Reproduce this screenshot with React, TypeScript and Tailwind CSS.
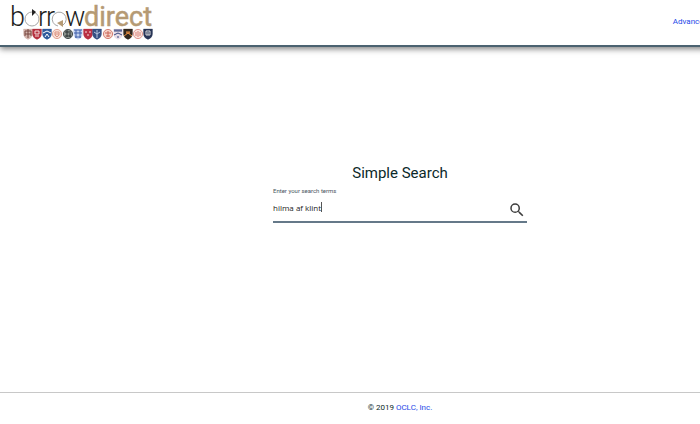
import { useState } from "react";

type Crest = {
  x: number;
  color: string;
  ink: string;
  shape: "shield" | "round";
  mark: string;
};

const crests: Crest[] = [
  { x: 28, color: "#d3b5ae", ink: "#77463f", shape: "shield", mark: "M-3 -3H3M-3 0H3M0 -5V4M-3 -3V2M3 -3V2" },
  { x: 37, color: "#b5303f", ink: "#f3dcdc", shape: "shield", mark: "M-2 -3H2V0H-2ZM-2 2H2" },
  { x: 47, color: "#2f5b9c", ink: "#ffffff", shape: "shield", mark: "M-4 -1L0 -3L4 -1M-2 3L0 0L2 3" },
  { x: 57, color: "#f8ded5", ink: "#dc9482", shape: "round", mark: "M-2 -2H2V1L0 3L-2 1ZM-2 0H2" },
  { x: 68, color: "#8a918c", ink: "#2a3133", shape: "round", mark: "M-3 -2H3M-3 2H3M-1 -4V3M2 -1V3" },
  { x: 78, color: "#c4d2f0", ink: "#3e5fa9", shape: "shield", mark: "M-4 -4H4M-4 -1H4M-3 3H3M-2 -4V4M2 -4V4" },
  { x: 88, color: "#b92f43", ink: "#f7dddd", shape: "shield", mark: "M-3 -2H-1M1 -2H3M-1 1H1" },
  { x: 97, color: "#344f82", ink: "#b7c6df", shape: "shield", mark: "M0 -4V4M-3 -2L0 0L3 -2" },
  { x: 108, color: "#f6d3ca", ink: "#c96557", shape: "round", mark: "M-3 -1H3M-2 2H2M0 -3V3" },
  { x: 118, color: "#e7dce7", ink: "#34457c", shape: "shield", mark: "M-4 -4H4M-4 -3H4M-4 1L0 -1L4 1M-1 3H1" },
  { x: 128, color: "#30271f", ink: "#e88e43", shape: "shield", mark: "M-4 2L0 -1L4 2M-2 -2H2M-2 -1H2" },
  { x: 138, color: "#fae4df", ink: "#d88178", shape: "round", mark: "M0 -3V3M-2 -2V2M2 -2V2" },
  { x: 148, color: "#293557", ink: "#d8d9dc", shape: "shield", mark: "M-2 -3H2V1H-2ZM0 -2V1" },
];

function Logo() {
  return (
    <svg width="160" height="44" viewBox="0 0 160 44" role="img" aria-label="borrowdirect">
      <g fontFamily="Roboto, sans-serif" fontSize="27">
        <g fill="#1d1d1d" fontWeight="300">
          <text x="10" y="26">b</text>
          <text x="38" y="26">r</text>
          <text x="46" y="26">r</text>
          <text x="65" y="26">w</text>
        </g>
        <text x="84" y="26" fill="#b59a74" stroke="#b59a74" strokeWidth="0.5">direct</text>
      </g>
      <g fill="none" stroke="#a6a6a6" strokeWidth="1">
        <circle cx="32" cy="19" r="7" />
        <path d="M58 26A7 7 0 1 1 63 25" />
      </g>
      <path d="M32 9L36 12L32 16Z" fill="#222" />
      <path d="M57 23L63 20V27Z" fill="#b59a74" />
      {crests.map((crest) => (
        <g key={crest.x} transform={`translate(${crest.x} 34)`}>
          {crest.shape === "round" ? (
            <circle r="4.6" fill={crest.color} stroke={crest.ink} strokeWidth="0.8" />
          ) : (
            <path
              d="M-4.5 -5H4.5V0Q4.5 3.5 0 5.5Q-4.5 3.5 -4.5 0Z"
              fill={crest.color}
              stroke={crest.color}
              strokeWidth="0.3"
            />
          )}
          <path d={crest.mark} fill="none" stroke={crest.ink} strokeWidth="1" />
        </g>
      ))}
    </svg>
  );
}

export default function App() {
  const [terms, setTerms] = useState("hilma af klint");
  return (
    <div className="min-h-screen overflow-hidden bg-white font-[Roboto,sans-serif] text-[#0b2929]">
      <div className="flex min-h-screen min-w-[800px] flex-col">
        <header className="flex h-[47px] items-start justify-between border-b-2 border-[#4b6270] bg-white pr-[92px] shadow-[0_2px_6px_rgba(0,0,0,0.5)]">
          <a href="#home" aria-label="borrowdirect home">
            <Logo />
          </a>
          <nav className="pt-4">
            <a href="#advanced" className="block text-[8px] leading-3 text-[#2348e8]">Advanced</a>
          </nav>
        </header>

        <main className="flex flex-1 flex-col items-center pt-[115px]">
          <h1 className="text-[15px] leading-[22px]">Simple Search</h1>
          <form
            role="search"
            className="mt-[3px] w-[254px] border-b-2 border-[#657989]"
            onSubmit={(event) => event.preventDefault()}
          >
            <label htmlFor="terms" className="block text-[6px] leading-[8px] text-[#4a5560]">
              Enter your search terms
            </label>
            <div className="flex items-start pt-1">
              <div className="relative flex-1">
                <input
                  id="terms"
                  type="text"
                  value={terms}
                  onChange={(event) => setTerms(event.target.value)}
                  className="block h-4 w-full bg-transparent font-['Open_Sans',sans-serif] text-[8px] text-[#222] outline-none"
                />
                <span aria-hidden="true" className="pointer-events-none absolute top-[3px] left-12 h-[10px] w-px bg-[#555]" />
              </div>
              <button type="submit" aria-label="Search" className="flex h-[22px] w-5 items-center justify-center">
                <svg width="18" height="18" viewBox="0 0 24 24" fill="#3c3c3c" aria-hidden="true">
                  <path d="M15.5 14h-.79l-.28-.27A6.47 6.47 0 0 0 16 9.5 6.5 6.5 0 1 0 9.5 16c1.61 0 3.09-.59 4.23-1.57l.27.28v.79l5 4.99L20.49 19l-4.99-5zm-6 0a4.5 4.5 0 1 1 0-9 4.5 4.5 0 0 1 0 9z" />
                </svg>
              </button>
            </div>
          </form>
        </main>

        <footer className="h-8 border-t border-[#c8c8c8] pt-2 text-center text-[8px] leading-[14px]">
          © 2019 <a href="#oclc" className="text-[#2348e8]">OCLC, Inc.</a>
        </footer>
      </div>
    </div>
  );
}
